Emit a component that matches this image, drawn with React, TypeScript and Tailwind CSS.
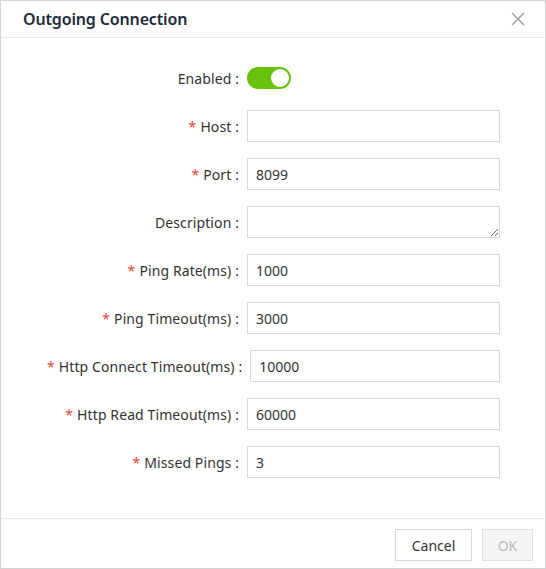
import React, { useState } from "react";

const fields = [
  { label: "Host", value: "", required: true },
  { label: "Port", value: "8099", required: true },
  { label: "Description", value: "", required: false, textarea: true },
  { label: "Ping Rate(ms)", value: "1000", required: true },
  { label: "Ping Timeout(ms)", value: "3000", required: true },
  { label: "Http Connect Timeout(ms)", value: "10000", required: true },
  { label: "Http Read Timeout(ms)", value: "60000", required: true },
  { label: "Missed Pings", value: "3", required: true },
];

export default function App() {
  const [enabled, setEnabled] = useState(true);

  return (
    <div
      className="w-[546px] h-[569px] bg-white border border-[#d4d4d4] flex flex-col text-[#333]"
      style={{ fontFamily: "'Noto Sans', 'Open Sans', sans-serif" }}
    >
      <div className="h-[37px] flex items-center justify-between pl-[22px] pr-[20px] border-b border-[#e8e8e8]">
        <h1 className="text-[16px] font-semibold tracking-[-0.15px] text-[#1c2b3a]">Outgoing Connection</h1>
        <button className="text-[#999]">
          <svg width="14" height="14" viewBox="0 0 14 14" fill="none" stroke="currentColor" strokeWidth="1.4">
            <path d="M1 1L13 13M13 1L1 13" />
          </svg>
        </button>
      </div>

      <div className="flex-1 pt-[24px] pl-[46px] pr-[45px]">
        <div className="flex items-center h-[32px] mb-[16px]">
          <label className="min-w-[192px] text-right text-[14px] tracking-[0.1px] whitespace-nowrap">Enabled :</label>
          <button
            onClick={() => setEnabled(!enabled)}
            className={`ml-[8px] w-[44px] h-[22px] rounded-full flex items-center px-[2px] ${enabled ? "bg-[#66c20a] justify-end" : "bg-[#ccc] justify-start"}`}
          >
            <span className="w-[18px] h-[18px] rounded-full bg-white" />
          </button>
        </div>

        {fields.map((f) => (
          <div key={f.label} className="flex items-center h-[32px] mb-[16px]">
            <label className="min-w-[192px] text-right text-[14px] tracking-[0.1px] whitespace-nowrap">
              {f.required && <span className="text-[#f04134] mr-[4px]">*</span>}
              {f.label} :
            </label>
            {f.textarea ? (
              <textarea
                defaultValue={f.value}
                className="ml-[8px] flex-1 h-[32px] border border-[#d9d9d9] px-[8px] py-[4px] text-[14px] outline-none resize-y"
              />
            ) : (
              <input
                defaultValue={f.value}
                className="ml-[8px] flex-1 h-[32px] border border-[#d9d9d9] px-[8px] text-[14px] text-[#333] outline-none"
              />
            )}
          </div>
        ))}
      </div>

      <div className="h-[50px] border-t border-[#e8e8e8] flex items-start justify-end gap-[10px] pt-[10px] pr-[12px]">
        <button className="h-[32px] w-[77px] border border-[#d9d9d9] bg-white text-[14px] text-[#333]">Cancel</button>
        <button disabled className="h-[32px] w-[51px] border border-[#e0e0e0] bg-[#f5f5f5] text-[14px] text-[#bbb]">OK</button>
      </div>
    </div>
  );
}
